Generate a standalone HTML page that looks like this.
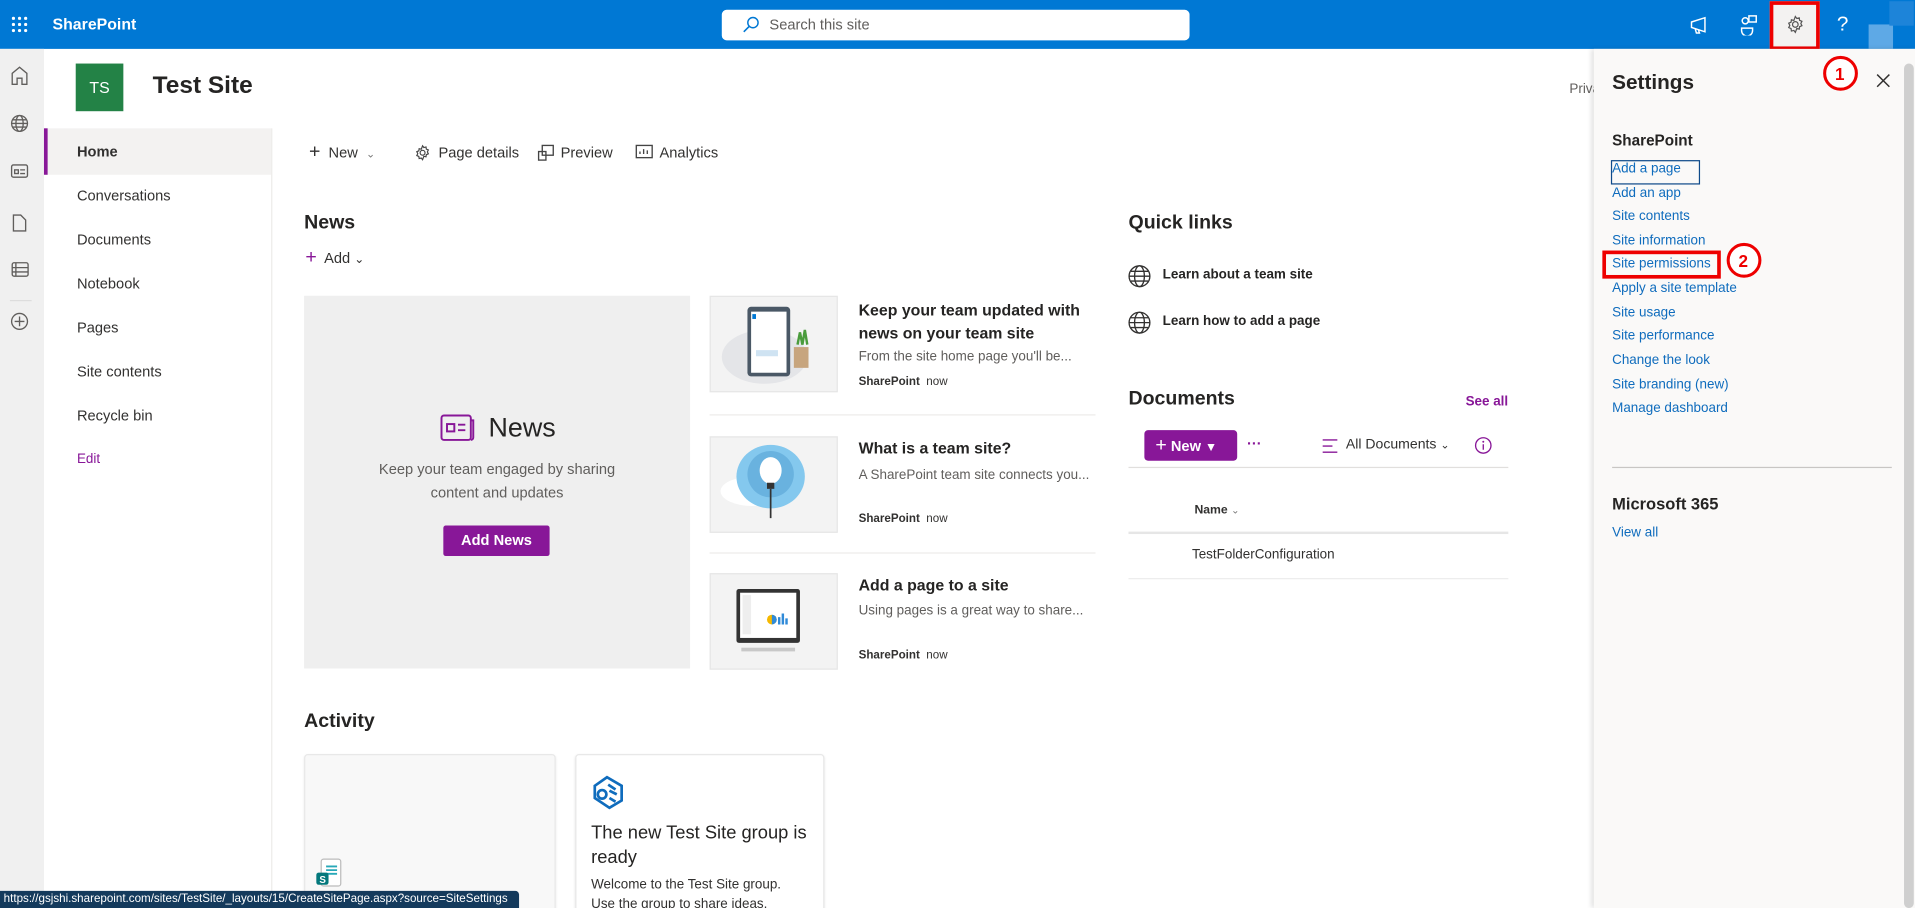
<!DOCTYPE html>
<html><head><meta charset="utf-8"><style>
*{margin:0;padding:0;box-sizing:border-box}
html,body{width:1915px;height:908px;overflow:hidden;background:#fff;font-family:"Liberation Sans",sans-serif;color:#323130}
#w{position:absolute;left:0;top:0;width:1568px;height:743px;transform:scale(1.22131,1.2221);transform-origin:0 0;overflow:hidden}
.a{position:absolute;white-space:nowrap}
.nav{font-size:12px;color:#323130}
.lk{font-size:11px;color:#0f6cbd}
.sep{position:absolute;height:1px;background:#edebe9}
</style></head><body><div id="w">
<!-- top bar -->
<div class="a" style="left:0;top:0;width:1568px;height:40px;background:#0078d4"></div>
<svg class="a" style="left:9px;top:13px" width="14" height="14"><g fill="#fff"><circle cx="2" cy="2" r="1.3"/><circle cx="7" cy="2" r="1.3"/><circle cx="12" cy="2" r="1.3"/><circle cx="2" cy="7" r="1.3"/><circle cx="7" cy="7" r="1.3"/><circle cx="12" cy="7" r="1.3"/><circle cx="2" cy="12" r="1.3"/><circle cx="7" cy="12" r="1.3"/><circle cx="12" cy="12" r="1.3"/></g></svg>
<div class="a" style="left:43px;top:12px;color:#fff;font-weight:bold;font-size:13px">SharePoint</div>
<div class="a" style="left:591px;top:8px;width:383px;height:25px;background:#fff;border-radius:4px"></div>
<svg class="a" style="left:608px;top:13px" width="14" height="14"><circle cx="8.5" cy="5.5" r="4.2" fill="none" stroke="#0078d4" stroke-width="1.2"/><path d="M5.5 8.5L1 13" stroke="#0078d4" stroke-width="1.3"/></svg>
<div class="a" style="left:630px;top:13px;font-size:12px;color:#605e5c">Search this site</div>
<svg class="a" style="left:1383px;top:13px" width="17" height="15"><path d="M2 5L13 1.5V13L2 9.5Z M5 10.5L6 14H8.5L7.5 11" fill="none" stroke="#fff" stroke-width="1.2"/></svg>
<svg class="a" style="left:1425px;top:12px" width="16" height="17"><rect x="7" y="1" width="6" height="5" fill="none" stroke="#fff" stroke-width="1.2"/><circle cx="4" cy="5" r="2.5" fill="none" stroke="#fff" stroke-width="1.2"/><path d="M1 11h9v2a4 4 0 0 1-9 0z" fill="none" stroke="#fff" stroke-width="1.2"/></svg>
<div class="a" style="left:1449px;top:1px;width:41px;height:40px;background:#f3f2f1;border:3px solid #e00"></div>
<svg class="a" style="left:1462px;top:12px" width="16" height="16" viewBox="0 0 16 16"><circle cx="8" cy="8" r="2.3" fill="none" stroke="#555" stroke-width="1"/><path d="M8 1.5l1.2 1.6 2-.5.3 2 1.9.8-.9 1.8.9 1.8-1.9.8-.3 2-2-.5L8 14.5l-1.2-1.6-2 .5-.3-2-1.9-.8.9-1.8-.9-1.8 1.9-.8.3-2 2 .5z" fill="none" stroke="#555" stroke-width="1"/></svg>
<div class="a" style="left:1504px;top:10px;color:#fff;font-size:17px">?</div>
<div class="a" style="left:1530px;top:20px;width:20px;height:20px;background:#5ea9e6"></div>
<div class="a" style="left:1547px;top:1px;width:20px;height:20px;background:#1d84d9"></div>
<!-- left rail -->
<div class="a" style="left:0;top:40px;width:36px;height:703px;background:#f0f0f0"></div>
<svg class="a" style="left:8px;top:53px" width="18" height="230" fill="none" stroke="#605e5c" stroke-width="1.1">
<path d="M2 16V7L8 2l6 5v9h-4v-5H6v5z"/>
<circle cx="8" cy="48" r="6.5"/><ellipse cx="8" cy="48" rx="3" ry="6.5"/><path d="M1.5 48h13M2.5 45h11M2.5 51h11"/>
<rect x="1.5" y="82" width="13" height="10" rx="1.5"/><rect x="4" y="86" width="3" height="3"/><path d="M8.5 86h4M8.5 89h4"/>
<path d="M3 136v-13h6l4 4v9z"/>
<rect x="2" y="162" width="13" height="11" rx="1.5"/><path d="M2 166h13M2 169.5h13M5 162v11"/>
<path d="M0 193h18" stroke="#ddd"/>
<circle cx="8" cy="210" r="6.5"/><path d="M8 206v8M4 210h8"/>
</svg>
<!-- site header -->
<div class="a" style="left:62px;top:52px;width:39px;height:39px;background:#238246;color:#fff;font-size:13px;text-align:center;line-height:39px">TS</div>
<div class="a" style="left:125px;top:59px;font-size:20px;font-weight:bold;color:#252423">Test Site</div>
<div class="a" style="left:1285px;top:67px;font-size:11px;color:#605e5c">Priva</div>
<!-- left nav -->
<div class="a" style="left:36px;top:105px;width:186px;height:38px;background:#f3f2f1;border-left:3px solid #881798"></div>
<div class="a" style="left:222px;top:105px;width:1px;height:638px;background:#edebe9"></div>
<div class="a nav" style="left:63px;top:117px;font-weight:bold">Home</div>
<div class="a nav" style="left:63px;top:153px">Conversations</div>
<div class="a nav" style="left:63px;top:189px">Documents</div>
<div class="a nav" style="left:63px;top:225px">Notebook</div>
<div class="a nav" style="left:63px;top:261px">Pages</div>
<div class="a nav" style="left:63px;top:297px">Site contents</div>
<div class="a nav" style="left:63px;top:333px">Recycle bin</div>
<div class="a" style="left:63px;top:370px;font-size:11px;color:#881798">Edit</div>
<!-- command bar -->
<div class="a" style="left:253px;top:116px;font-size:12px;color:#323130"><span style="font-size:16px;font-weight:300">+</span>&nbsp; New &nbsp;<span style="font-size:9px;color:#777">&#8964;</span></div>
<svg class="a" style="left:339px;top:118px" width="14" height="14" viewBox="0 0 16 16"><circle cx="8" cy="8" r="2.3" fill="none" stroke="#444" stroke-width="1.1"/><path d="M8 1.5l1.2 1.6 2-.5.3 2 1.9.8-.9 1.8.9 1.8-1.9.8-.3 2-2-.5L8 14.5l-1.2-1.6-2 .5-.3-2-1.9-.8.9-1.8-.9-1.8 1.9-.8.3-2 2 .5z" fill="none" stroke="#444" stroke-width="1.1"/></svg>
<div class="a" style="left:359px;top:118px;font-size:12px">Page details</div>
<svg class="a" style="left:440px;top:118px" width="14" height="14" fill="none" stroke="#444" stroke-width="1.1"><rect x="4" y="1" width="9" height="8"/><rect x="1" y="6" width="6" height="7"/></svg>
<div class="a" style="left:459px;top:118px;font-size:12px">Preview</div>
<svg class="a" style="left:520px;top:118px" width="15" height="13" fill="none" stroke="#444" stroke-width="1.1"><rect x="1" y="1" width="13" height="10"/><path d="M4 8V6M7 8V4M10 8V5"/></svg>
<div class="a" style="left:540px;top:118px;font-size:12px">Analytics</div>
<!-- News -->
<div class="a" style="left:249px;top:174px;font-size:16px;font-weight:bold;color:#252423">News</div>
<div class="a" style="left:250px;top:202px;font-size:12px;color:#323130"><span style="color:#881798;font-size:16px">+</span>&nbsp; Add <span style="font-size:10px">&#8964;</span></div>
<div class="a" style="left:249px;top:242px;width:316px;height:305px;background:#efefef"></div>
<svg class="a" style="left:360px;top:338px" width="30" height="25" fill="none" stroke="#881798" stroke-width="1.6"><rect x="1.5" y="2" width="24" height="20" rx="2"/><path d="M25.5 6h2v14a2 2 0 0 1-2 2"/><rect x="6" y="9" width="6" height="6"/><path d="M15 9.5h6M15 14h6"/></svg>
<div class="a" style="left:400px;top:337px;font-size:22px;font-weight:300;color:#252423">News</div>
<div class="a" style="left:249px;top:375px;width:316px;text-align:center;font-size:12px;color:#605e5c;line-height:19px;white-space:normal">Keep your team engaged by sharing<br>content and updates</div>
<div class="a" style="left:363px;top:430px;width:87px;height:25px;background:#881798;border-radius:2px;color:#fff;font-size:12px;font-weight:bold;text-align:center;line-height:25px">Add News</div>
<!-- news items -->
<div class="a" style="left:581px;top:242px;width:105px;height:79px;background:#f3f3f3;border:1px solid #e6e6e6"></div>
<svg class="a" style="left:581px;top:242px" width="105" height="79"><ellipse cx="45" cy="50" rx="35" ry="22" fill="#e4e5e8"/><rect x="31" y="9" width="35" height="57" rx="3" fill="#4a5866"/><rect x="34" y="13" width="29" height="50" fill="#fff"/><rect x="35" y="15" width="3" height="4" fill="#0078d4"/><path d="M38 47h18" stroke="#cfe3f2" stroke-width="5"/><path d="M72 40l2 -10 2 10 2-12 2 12" stroke="#4a9c3c" stroke-width="2" fill="none"/><rect x="69" y="42" width="12" height="17" fill="#c7a57e"/></svg>
<div class="a" style="left:703px;top:244px;font-size:13px;font-weight:bold;color:#252423;line-height:19px">Keep your team updated with<br>news on your team site</div>
<div class="a" style="left:703px;top:286px;font-size:11px;color:#605e5c">From the site home page you'll be...</div>
<div class="a" style="left:703px;top:307px;font-size:9.5px;color:#323130"><b>SharePoint</b>&nbsp; now</div>
<div class="sep" style="left:581px;top:339px;width:316px"></div>
<div class="a" style="left:581px;top:357px;width:105px;height:79px;background:#f3f3f3;border:1px solid #e6e6e6"></div>
<svg class="a" style="left:581px;top:357px" width="105" height="79"><ellipse cx="35" cy="45" rx="26" ry="12" fill="#fff"/><ellipse cx="62" cy="38" rx="12" ry="12" fill="#fff"/><ellipse cx="50" cy="33" rx="28" ry="26" fill="#84c8ee"/><ellipse cx="50" cy="31" rx="19" ry="19" fill="#69b2df"/><ellipse cx="50" cy="28" rx="9" ry="11" fill="#fff"/><rect x="47" y="38" width="6" height="5" fill="#333"/><path d="M50 43v24" stroke="#333" stroke-width="1.4"/></svg>
<div class="a" style="left:703px;top:359px;font-size:13px;font-weight:bold;color:#252423">What is a team site?</div>
<div class="a" style="left:703px;top:383px;font-size:11px;color:#605e5c">A SharePoint team site connects you...</div>
<div class="a" style="left:703px;top:419px;font-size:9.5px;color:#323130"><b>SharePoint</b>&nbsp; now</div>
<div class="sep" style="left:581px;top:452px;width:316px"></div>
<div class="a" style="left:581px;top:469px;width:105px;height:79px;background:#f3f3f3;border:1px solid #e6e6e6"></div>
<svg class="a" style="left:581px;top:469px" width="105" height="79"><rect x="22" y="13" width="52" height="44" rx="2" fill="#333"/><rect x="25" y="16" width="46" height="37" fill="#fff"/><rect x="27" y="18" width="7" height="32" fill="#eee"/><circle cx="51" cy="38" r="4" fill="#f5b800"/><path d="M51 38v-4a4 4 0 0 1 0 8z" fill="#2f8ad8"/><path d="M57 42v-6M60 42v-9M63 42v-5" stroke="#2f8ad8" stroke-width="2"/><rect x="26" y="61" width="44" height="3" fill="#c8c8c8"/></svg>
<div class="a" style="left:703px;top:471px;font-size:13px;font-weight:bold;color:#252423">Add a page to a site</div>
<div class="a" style="left:703px;top:494px;font-size:11px;color:#605e5c">Using pages is a great way to share...</div>
<div class="a" style="left:703px;top:531px;font-size:9.5px;color:#323130"><b>SharePoint</b>&nbsp; now</div>
<!-- Quick links -->
<div class="a" style="left:924px;top:174px;font-size:16px;font-weight:bold;color:#252423">Quick links</div>
<svg class="a" style="left:923px;top:216px" width="20" height="60" fill="none" stroke="#323130" stroke-width="1.1"><circle cx="10" cy="10" r="8.5"/><ellipse cx="10" cy="10" rx="4" ry="8.5"/><path d="M1.5 10h17M3 6h14M3 14h14"/><circle cx="10" cy="48" r="8.5"/><ellipse cx="10" cy="48" rx="4" ry="8.5"/><path d="M1.5 48h17M3 44h14M3 52h14"/></svg>
<div class="a" style="left:952px;top:219px;font-size:11px;font-weight:bold;color:#252423">Learn about a team site</div>
<div class="a" style="left:952px;top:257px;font-size:11px;font-weight:bold;color:#252423">Learn how to add a page</div>
<!-- Documents -->
<div class="a" style="left:924px;top:318px;font-size:16px;font-weight:bold;color:#252423">Documents</div>
<div class="a" style="left:1200px;top:323px;font-size:11px;font-weight:bold;color:#881798">See all</div>
<div class="a" style="left:937px;top:352px;width:76px;height:25px;background:#881798;border-radius:3px;color:#fff;font-size:12px;font-weight:bold;line-height:25px;padding-left:9px"><span style="font-size:16px;font-weight:normal">+</span> New <span style="font-size:10px">&#9660;</span></div>
<div class="a" style="left:1021px;top:356px;font-size:12px;color:#881798;font-weight:bold">···</div>
<svg class="a" style="left:1082px;top:358px" width="14" height="14" stroke="#881798" stroke-width="1.1"><path d="M1 2h12M1 7h8M1 12h12"/></svg>
<div class="a" style="left:1102px;top:358px;font-size:11.5px;color:#323130">All Documents <span style="font-size:9px">&#8964;</span></div>
<svg class="a" style="left:1207px;top:357px" width="15" height="15"><circle cx="7.5" cy="7.5" r="6.3" fill="none" stroke="#881798" stroke-width="1.1"/><path d="M7.5 6.5v4.5" stroke="#881798" stroke-width="1.1"/><circle cx="7.5" cy="4.5" r=".8" fill="#881798"/></svg>
<div class="a" style="left:924px;top:382px;width:311px;height:1px;background:#e1dfdd"></div>
<div class="a" style="left:978px;top:412px;font-size:10px;font-weight:bold;color:#323130">Name <span style="font-weight:normal;font-size:8px;color:#777">&#8964;</span></div>
<div class="a" style="left:924px;top:435px;width:311px;height:2px;background:#e6e6e6"></div>
<div class="a" style="left:976px;top:448px;font-size:11px;color:#323130">TestFolderConfiguration</div>
<div class="a" style="left:924px;top:473px;width:311px;height:1px;background:#ececec"></div>
<!-- Activity -->
<div class="a" style="left:249px;top:582px;font-size:16px;font-weight:bold;color:#252423">Activity</div>
<div class="a" style="left:249px;top:617px;width:206px;height:140px;background:#f8f8f8;border:1px solid #e8e8e8;border-radius:3px;box-shadow:0 1px 2px rgba(0,0,0,.08)"></div>
<svg class="a" style="left:258px;top:702px" width="24" height="26"><rect x="5" y="1" width="16" height="22" rx="2" fill="#fff" stroke="#bbb"/><path d="M9 7h9M9 10h9M9 13h9" stroke="#28a8b8" stroke-width="1.5"/><rect x="1" y="12" width="10" height="10" rx="2" fill="#03787c"/><text x="3.5" y="20.5" font-size="8" fill="#fff" font-family="Liberation Sans" font-weight="bold">S</text></svg>
<div class="a" style="left:471px;top:617px;width:204px;height:140px;background:#fff;border:1px solid #e8e8e8;border-radius:3px;box-shadow:0 1px 2px rgba(0,0,0,.1)"></div>
<svg class="a" style="left:483px;top:633px" width="30" height="30" fill="none" stroke="#0f6cbd" stroke-width="2.2"><path d="M4 10L14 3l12 7v12l-10 6L4 20z"/><circle cx="10" cy="17" r="3.5"/><path d="M15 9l6 4M16 14l6 3M16 20l5 3"/></svg>
<div class="a" style="left:484px;top:672px;font-size:15px;color:#252423;line-height:20px">The new Test Site group is<br>ready</div>
<div class="a" style="left:484px;top:716px;font-size:11px;color:#323130;line-height:16px">Welcome to the Test Site group.<br>Use the group to share ideas,</div>
<!-- status -->
<div class="a" style="left:0;top:729px;width:425px;height:14px;background:#143a5c;border-radius:0 3px 0 0;color:#fff;font-size:9.5px;line-height:14px;padding-left:3px;overflow:hidden">https://gsjshi.sharepoint.com/sites/TestSite/_layouts/15/CreateSitePage.aspx?source=SiteSettings</div>
<!-- settings panel -->
<div class="a" style="left:1305px;top:40px;width:263px;height:703px;background:#faf9f8;box-shadow:-2px 0 4px rgba(0,0,0,.12)"></div>
<div class="a" style="left:1559px;top:52px;width:8px;height:691px;background:#cfcfcf;border-radius:4px"></div>
<div class="a" style="left:1320px;top:58px;font-size:17px;font-weight:bold;color:#252423">Settings</div>
<svg class="a" style="left:1536px;top:60px" width="12" height="12" stroke="#323130" stroke-width="1.2"><path d="M1 1l10 10M11 1L1 11"/></svg>
<svg class="a" style="left:1491px;top:44px" width="34" height="34"><circle cx="16" cy="16" r="13" fill="#fff" stroke="#e00" stroke-width="2.5"/><text x="11.5" y="21.5" font-size="14" font-weight="bold" fill="#e00" font-family="Liberation Sans">1</text></svg>
<div class="a" style="left:1320px;top:108px;font-size:12.5px;font-weight:bold;color:#252423">SharePoint</div>
<div class="a" style="left:1319px;top:131px;width:73px;height:20px;border:1px solid #0f4a8a"></div>
<div class="a lk" style="left:1320px;top:132px">Add a page</div>
<div class="a lk" style="left:1320px;top:152px">Add an app</div>
<div class="a lk" style="left:1320px;top:171px">Site contents</div>
<div class="a lk" style="left:1320px;top:191px">Site information</div>
<div class="a" style="left:1312px;top:205px;width:97px;height:23px;border:3px solid #e00"></div>
<div class="a lk" style="left:1320px;top:210px">Site permissions</div>
<svg class="a" style="left:1412px;top:197px" width="34" height="34"><circle cx="16" cy="16" r="13" fill="#fff" stroke="#e00" stroke-width="2.5"/><text x="11.5" y="21.5" font-size="14" font-weight="bold" fill="#e00" font-family="Liberation Sans">2</text></svg>
<div class="a lk" style="left:1320px;top:230px">Apply a site template</div>
<div class="a lk" style="left:1320px;top:250px">Site usage</div>
<div class="a lk" style="left:1320px;top:269px">Site performance</div>
<div class="a lk" style="left:1320px;top:289px">Change the look</div>
<div class="a lk" style="left:1320px;top:309px">Site branding (new)</div>
<div class="a lk" style="left:1320px;top:328px">Manage dashboard</div>
<div class="a" style="left:1320px;top:382px;width:229px;height:1px;background:#c8c6c4"></div>
<div class="a" style="left:1320px;top:405px;font-size:13.5px;font-weight:bold;color:#252423">Microsoft 365</div>
<div class="a lk" style="left:1320px;top:430px">View all</div>
</div></body></html>
